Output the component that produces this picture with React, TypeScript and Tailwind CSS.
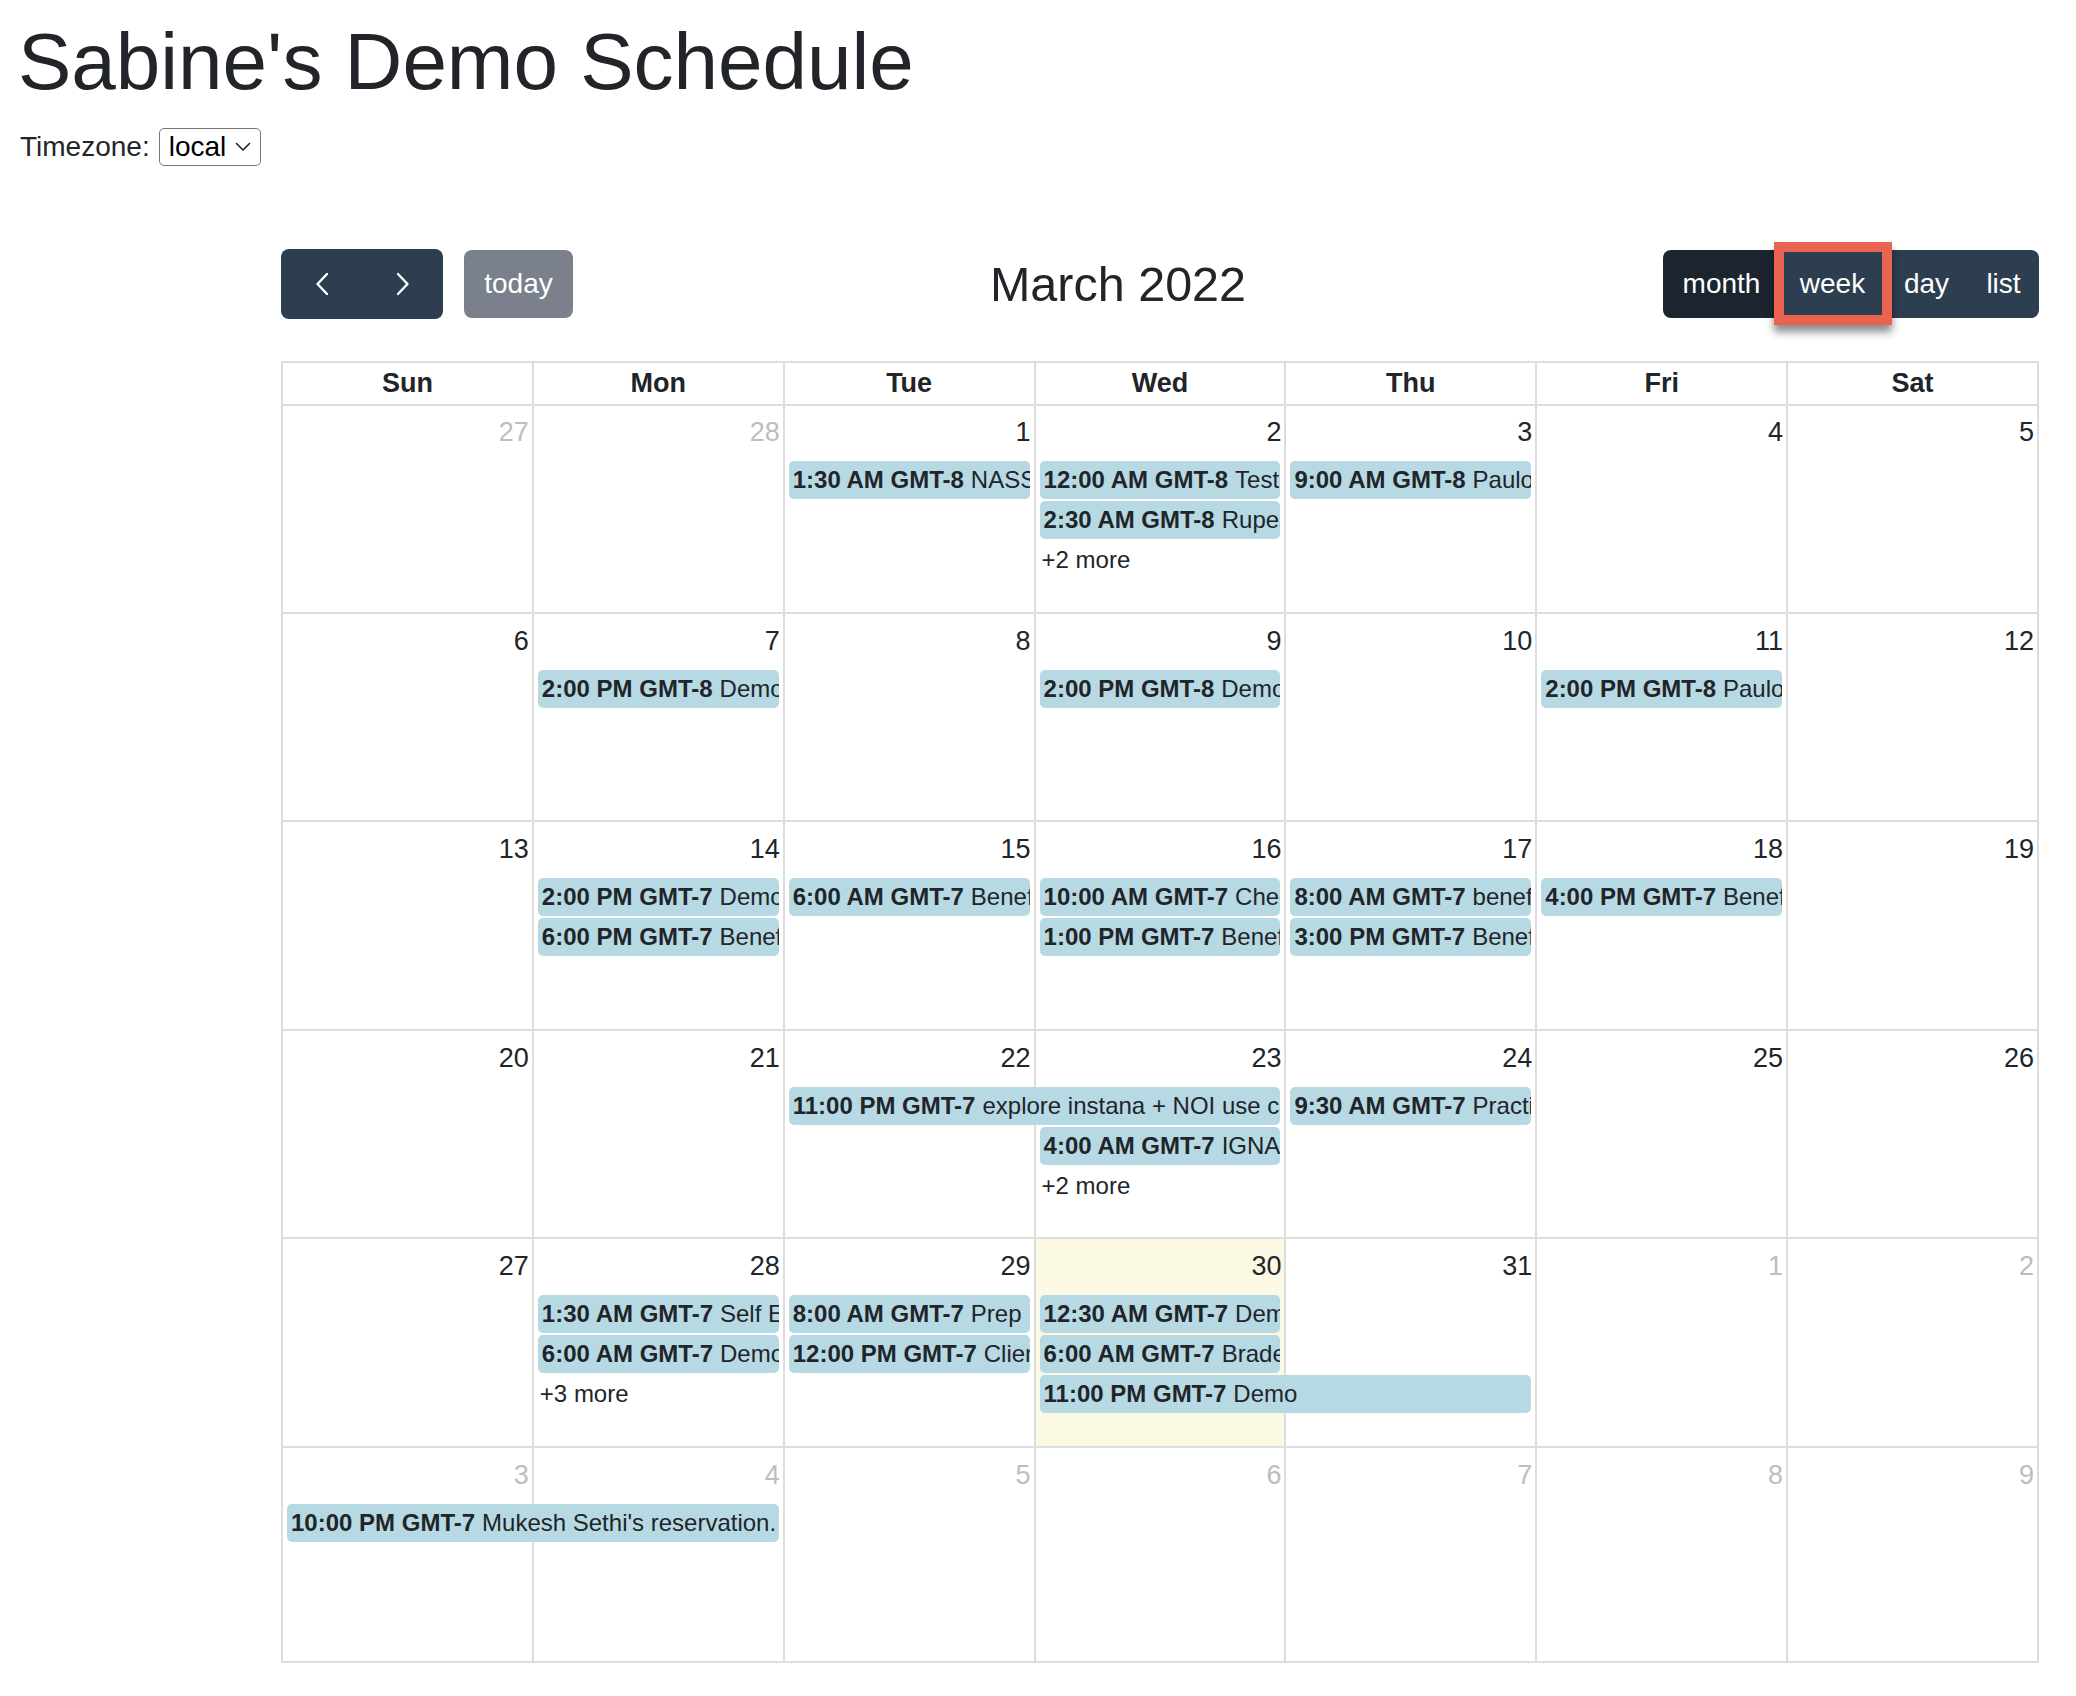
import { ChangeEvent, useState } from 'react';

type CalEvent = { col: string; row: string; time: string; title: string };
type MoreLink = { col: string; row: string; label: string };
type Day = { n: number; other?: boolean; today?: boolean };
type Week = { days: Day[]; events: CalEvent[]; more: MoreLink[] };

const COLS = ['col-[1/2]', 'col-[2/3]', 'col-[3/4]', 'col-[4/5]', 'col-[5/6]', 'col-[6/7]', 'col-[7/8]'];
const DOW = ['Sun', 'Mon', 'Tue', 'Wed', 'Thu', 'Fri', 'Sat'];

const weeks: Week[] = [
  {
    days: [{ n: 27, other: true }, { n: 28, other: true }, { n: 1 }, { n: 2 }, { n: 3 }, { n: 4 }, { n: 5 }],
    events: [
      { col: 'col-[3/4]', row: 'row-[2/3]', time: '1:30 AM GMT-8', title: 'NASSCOM session' },
      { col: 'col-[4/5]', row: 'row-[2/3]', time: '12:00 AM GMT-8', title: 'Test' },
      { col: 'col-[4/5]', row: 'row-[3/4]', time: '2:30 AM GMT-8', title: 'Rupesh demo' },
      { col: 'col-[5/6]', row: 'row-[2/3]', time: '9:00 AM GMT-8', title: 'Paulo demo' },
    ],
    more: [{ col: 'col-[4/5]', row: 'row-[4/5]', label: '+2 more' }],
  },
  {
    days: [{ n: 6 }, { n: 7 }, { n: 8 }, { n: 9 }, { n: 10 }, { n: 11 }, { n: 12 }],
    events: [
      { col: 'col-[2/3]', row: 'row-[2/3]', time: '2:00 PM GMT-8', title: 'Demo' },
      { col: 'col-[4/5]', row: 'row-[2/3]', time: '2:00 PM GMT-8', title: 'Demo' },
      { col: 'col-[6/7]', row: 'row-[2/3]', time: '2:00 PM GMT-8', title: 'Paulo demo' },
    ],
    more: [],
  },
  {
    days: [{ n: 13 }, { n: 14 }, { n: 15 }, { n: 16 }, { n: 17 }, { n: 18 }, { n: 19 }],
    events: [
      { col: 'col-[2/3]', row: 'row-[2/3]', time: '2:00 PM GMT-7', title: 'Demo' },
      { col: 'col-[2/3]', row: 'row-[3/4]', time: '6:00 PM GMT-7', title: 'Benefits' },
      { col: 'col-[3/4]', row: 'row-[2/3]', time: '6:00 AM GMT-7', title: 'Benefits' },
      { col: 'col-[4/5]', row: 'row-[2/3]', time: '10:00 AM GMT-7', title: 'Check-in' },
      { col: 'col-[4/5]', row: 'row-[3/4]', time: '1:00 PM GMT-7', title: 'Benefits' },
      { col: 'col-[5/6]', row: 'row-[2/3]', time: '8:00 AM GMT-7', title: 'benefits' },
      { col: 'col-[5/6]', row: 'row-[3/4]', time: '3:00 PM GMT-7', title: 'Benefits' },
      { col: 'col-[6/7]', row: 'row-[2/3]', time: '4:00 PM GMT-7', title: 'Benefits' },
    ],
    more: [],
  },
  {
    days: [{ n: 20 }, { n: 21 }, { n: 22 }, { n: 23 }, { n: 24 }, { n: 25 }, { n: 26 }],
    events: [
      { col: 'col-[3/5]', row: 'row-[2/3]', time: '11:00 PM GMT-7', title: 'explore instana + NOI use cases' },
      { col: 'col-[4/5]', row: 'row-[3/4]', time: '4:00 AM GMT-7', title: 'IGNAS demo' },
      { col: 'col-[5/6]', row: 'row-[2/3]', time: '9:30 AM GMT-7', title: 'Practice' },
    ],
    more: [{ col: 'col-[4/5]', row: 'row-[4/5]', label: '+2 more' }],
  },
  {
    days: [{ n: 27 }, { n: 28 }, { n: 29 }, { n: 30, today: true }, { n: 31 }, { n: 1, other: true }, { n: 2, other: true }],
    events: [
      { col: 'col-[2/3]', row: 'row-[2/3]', time: '1:30 AM GMT-7', title: 'Self Enablement' },
      { col: 'col-[2/3]', row: 'row-[3/4]', time: '6:00 AM GMT-7', title: 'Demo' },
      { col: 'col-[3/4]', row: 'row-[2/3]', time: '8:00 AM GMT-7', title: 'Prep' },
      { col: 'col-[3/4]', row: 'row-[3/4]', time: '12:00 PM GMT-7', title: 'Client call' },
      { col: 'col-[4/5]', row: 'row-[2/3]', time: '12:30 AM GMT-7', title: 'Demo' },
      { col: 'col-[4/5]', row: 'row-[3/4]', time: '6:00 AM GMT-7', title: 'Braden' },
      { col: 'col-[4/6]', row: 'row-[4/5]', time: '11:00 PM GMT-7', title: 'Demo' },
    ],
    more: [{ col: 'col-[2/3]', row: 'row-[4/5]', label: '+3 more' }],
  },
  {
    days: [3, 4, 5, 6, 7, 8, 9].map((n) => ({ n, other: true })),
    events: [
      { col: 'col-[1/3]', row: 'row-[2/3]', time: '10:00 PM GMT-7', title: "Mukesh Sethi's reservation." },
    ],
    more: [],
  },
];

function Chevron({ dir }: { dir: 'left' | 'right' }) {
  return (
    <svg width="14" height="24" viewBox="0 0 14 24" fill="none" stroke="white" strokeWidth="2.4" strokeLinecap="round" strokeLinejoin="round">
      {dir === 'left' ? <path d="M12 2 L2.5 12 L12 22" /> : <path d="M2 2 L11.5 12 L2 22" />}
    </svg>
  );
}

export default function App() {
  const [tz, setTz] = useState('local');

  return (
    <div className="min-h-screen bg-white px-[20px] pt-[14px] font-['Liberation_Sans',Arial,sans-serif] text-[#212529]">
      <h1 className="-ml-[2px] mb-[16px] text-[80px] leading-[96px] font-normal">Sabine's Demo Schedule</h1>

      {/* selector de zona */}
      <div className="flex h-[42px] items-center text-[28px]">
        <span>Timezone:</span>
        <div className="ml-[9px] flex h-[38px] w-[102px] items-center rounded-[5px] border border-[#767676] bg-white pl-[9px] pr-[9px]">
          <select
            value={tz}
            onChange={(e: ChangeEvent<HTMLSelectElement>) => setTz(e.target.value)}
            className="w-full appearance-none bg-transparent text-[28px] leading-none text-black outline-none"
          >
            <option value="local">local</option>
            <option value="UTC">UTC</option>
          </select>
          <svg width="16" height="10" viewBox="0 0 16 10" fill="none" stroke="#222" strokeWidth="1.6" strokeLinecap="round" strokeLinejoin="round" className="shrink-0">
            <path d="M1.5 1.5 L8 8 L14.5 1.5" />
          </svg>
        </div>
      </div>

      <div className="mt-[81px] ml-[261px] w-[1758px]">
        {/* toolbar */}
        <div className="mb-[42px] flex h-[70px] items-center justify-between">
          <div className="flex items-center">
            <div className="flex h-[70px] overflow-hidden rounded-[8px] bg-[#2c3e50]">
              <button className="flex w-[81px] items-center justify-center">
                <Chevron dir="left" />
              </button>
              <button className="flex w-[81px] items-center justify-center">
                <Chevron dir="right" />
              </button>
            </div>
            <button className="ml-[21px] h-[68px] w-[109px] rounded-[8px] bg-[#7a818c] text-[28px] text-white">today</button>
          </div>

          <h2 className="text-[48.5px] leading-none font-normal">March 2022</h2>

          <div className="flex h-[68px] text-[28px] text-white">
            <button className="w-[117px] rounded-l-[8px] bg-[#1c252f]">month</button>
            <button className="relative w-[105px] bg-[#2c3e50]">
              week
              <span className="absolute -top-[8px] -bottom-[7px] -left-[6px] -right-[7px] z-10 border-[10px] border-[#ea6350] shadow-[0_7px_8px_rgba(0,0,0,0.45)]" />
            </button>
            <button className="w-[83px] bg-[#2c3e50]">day</button>
            <button className="w-[71px] rounded-r-[8px] bg-[#2c3e50]">list</button>
          </div>
        </div>

        {/* month grid */}
        <div className="grid h-[1302px] grid-rows-[42px_repeat(5,208.5px)_1fr] border-t-2 border-l-2 border-[#ddd]">
          <div className="grid grid-cols-7">
            {DOW.map((d) => (
              <div key={d} className="flex items-center justify-center border-r-2 border-b-2 border-[#ddd] text-[27px] font-bold">
                {d}
              </div>
            ))}
          </div>

          {weeks.map((w, wi) => (
            <div key={wi} className="grid grid-cols-7 grid-rows-[55px_40px_40px_40px_1fr]">
              {w.days.map((d, di) => (
                <div
                  key={di}
                  className={`${COLS[di]} row-[1/6] flex justify-end border-r-2 border-b-2 border-[#ddd] ${d.today ? 'bg-[#fbf8e3]' : ''}`}
                >
                  <span className={`h-fit pt-[7px] pr-[3px] text-[27px] leading-[40px] ${d.other ? 'text-[#bcbebf]' : 'text-[#212529]'}`}>
                    {d.n}
                  </span>
                </div>
              ))}

              {w.events.map((ev, ei) => (
                <div
                  key={ei}
                  className={`${ev.col} ${ev.row} mt-[1px] ml-[4px] mr-[6px] h-[38px] overflow-hidden rounded-[5px] bg-[#b7d9e4] pl-[4px] text-[24px] leading-[38px] whitespace-nowrap text-[#212529]`}
                >
                  <span className="font-bold">{ev.time}</span>
                  <span className="ml-[7px]">{ev.title}</span>
                </div>
              ))}

              {w.more.map((m, mi) => (
                <div key={mi} className={`${m.col} ${m.row} flex items-center pl-[6px] text-[24px] text-[#212529]`}>
                  {m.label}
                </div>
              ))}
            </div>
          ))}
        </div>
      </div>
    </div>
  );
}
